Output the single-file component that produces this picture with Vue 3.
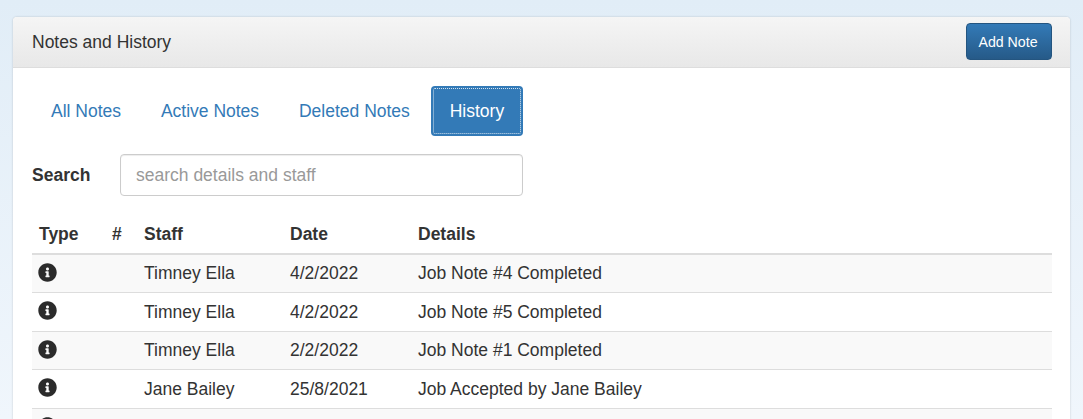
<template>
  <div class="page">
    <div class="panel">
      <div class="panel-heading">
        <span class="title">Notes and History</span>
        <button class="add-btn">Add Note</button>
      </div>
      <div class="panel-body">
        <ul class="tabs">
          <li v-for="t in tabs" :key="t" :class="{ active: t === 'History' }">{{ t }}</li>
        </ul>
        <div class="search">
          <label>Search</label>
          <input type="text" placeholder="search details and staff" />
        </div>
        <table>
          <thead>
            <tr>
              <th class="c-type">Type</th>
              <th class="c-num">#</th>
              <th class="c-staff">Staff</th>
              <th class="c-date">Date</th>
              <th>Details</th>
            </tr>
          </thead>
          <tbody>
            <tr v-for="(r, i) in rows" :key="i">
              <td>
                <svg class="info" viewBox="0 0 512 512" width="19" height="19">
                  <path fill="#2b2b2b" d="M256 8C119.043 8 8 119.083 8 256c0 136.997 111.043 248 248 248s248-111.003 248-248C504 119.083 392.957 8 256 8zm0 110c23.196 0 42 18.804 42 42s-18.804 42-42 42-42-18.804-42-42 18.804-42 42-42zm56 254c0 6.627-5.373 12-12 12h-88c-6.627 0-12-5.373-12-12v-24c0-6.627 5.373-12 12-12h12v-64h-12c-6.627 0-12-5.373-12-12v-24c0-6.627 5.373-12 12-12h64c6.627 0 12 5.373 12 12v100h12c6.627 0 12 5.373 12 12v24z" />
                </svg>
              </td>
              <td></td>
              <td>{{ r.staff }}</td>
              <td>{{ r.date }}</td>
              <td>{{ r.details }}</td>
            </tr>
          </tbody>
        </table>
      </div>
    </div>
  </div>
</template>

<script setup>
const tabs = ['All Notes', 'Active Notes', 'Deleted Notes', 'History']
const rows = [
  { staff: 'Timney Ella', date: '4/2/2022', details: 'Job Note #4 Completed' },
  { staff: 'Timney Ella', date: '4/2/2022', details: 'Job Note #5 Completed' },
  { staff: 'Timney Ella', date: '2/2/2022', details: 'Job Note #1 Completed' },
  { staff: 'Jane Bailey', date: '25/8/2021', details: 'Job Accepted by Jane Bailey' },
  { staff: '', date: '', details: '' },
]
</script>

<style>
html, body {
  margin: 0;
  height: 100%;
  overflow: hidden;
}
</style>

<style scoped>
.page {
  height: 419px;
  overflow: hidden;
  box-sizing: border-box;
  padding: 17px 13px 0;
  background: linear-gradient(to bottom, #e1edf7, #f0f6fc);
  font-family: "Liberation Sans", Arial, sans-serif;
  font-size: 17.5px;
  line-height: 22px;
  color: #333;
}
.panel {
  background: #fff;
  border-radius: 4px 4px 0 0;
  box-shadow: 0 0 2px rgba(0, 0, 0, 0.22);
}
.panel-heading {
  display: flex;
  justify-content: space-between;
  align-items: center;
  height: 50px;
  padding: 0 18px 0 19px;
  background: linear-gradient(to bottom, #f5f5f5, #e8e8e8);
  border-bottom: 1px solid #ddd;
  border-radius: 4px 4px 0 0;
}
.title {
  font-size: 17.5px;
}
.add-btn {
  height: 37px;
  width: 86px;
  margin-top: -1px;
  padding: 0 2px 0 0;
  font: 14.2px "Liberation Sans", Arial, sans-serif;
  color: #fff;
  background: linear-gradient(to bottom, #337ab7, #265a88);
  border: 1px solid #245580;
  border-radius: 4px;
}
.panel-body {
  padding: 18px 18px 0 19px;
}
.tabs {
  display: flex;
  list-style: none;
  gap: 1.85px;
  margin: 0;
  padding: 0;
}
.tabs li {
  padding: 14px 19px;
  border-radius: 4px;
  color: #337ab7;
}
.tabs li.active {
  color: #fff;
  background: #337ab7;
  outline: 1px dotted #d5e3f0;
  outline-offset: -3px;
}
.search {
  display: flex;
  align-items: center;
  margin-top: 18px;
}
.search label {
  width: 88px;
  font-weight: 700;
}
.search input {
  box-sizing: border-box;
  width: 403px;
  height: 42px;
  padding: 0 15px;
  font: 17.5px "Liberation Sans", Arial, sans-serif;
  color: #555;
  border: 1px solid #ccc;
  border-radius: 4px;
  outline: none;
  box-shadow: inset 0 1px 1px rgba(0, 0, 0, 0.075);
}
.search input::placeholder {
  color: #999;
}
table {
  width: 100%;
  margin-top: 19px;
  border-collapse: collapse;
  table-layout: fixed;
}
th {
  padding: 8.5px 7px 7.7px;
  line-height: 21.5px;
  text-align: left;
  font-weight: 700;
  border-bottom: 2px solid #ddd;
}
td {
  padding: 8.6px 7px 7.4px;
  line-height: 21.5px;
  border-bottom: 1px solid #ddd;
  vertical-align: top;
}
tbody tr:nth-child(odd) {
  background: #f9f9f9;
}
.c-type { width: 59px; }
.c-num { width: 18px; }
.c-staff { width: 132px; }
.c-date { width: 114px; }
.info {
  display: block;
  margin: -0.3px 0 -1px -1px;
}
</style>
